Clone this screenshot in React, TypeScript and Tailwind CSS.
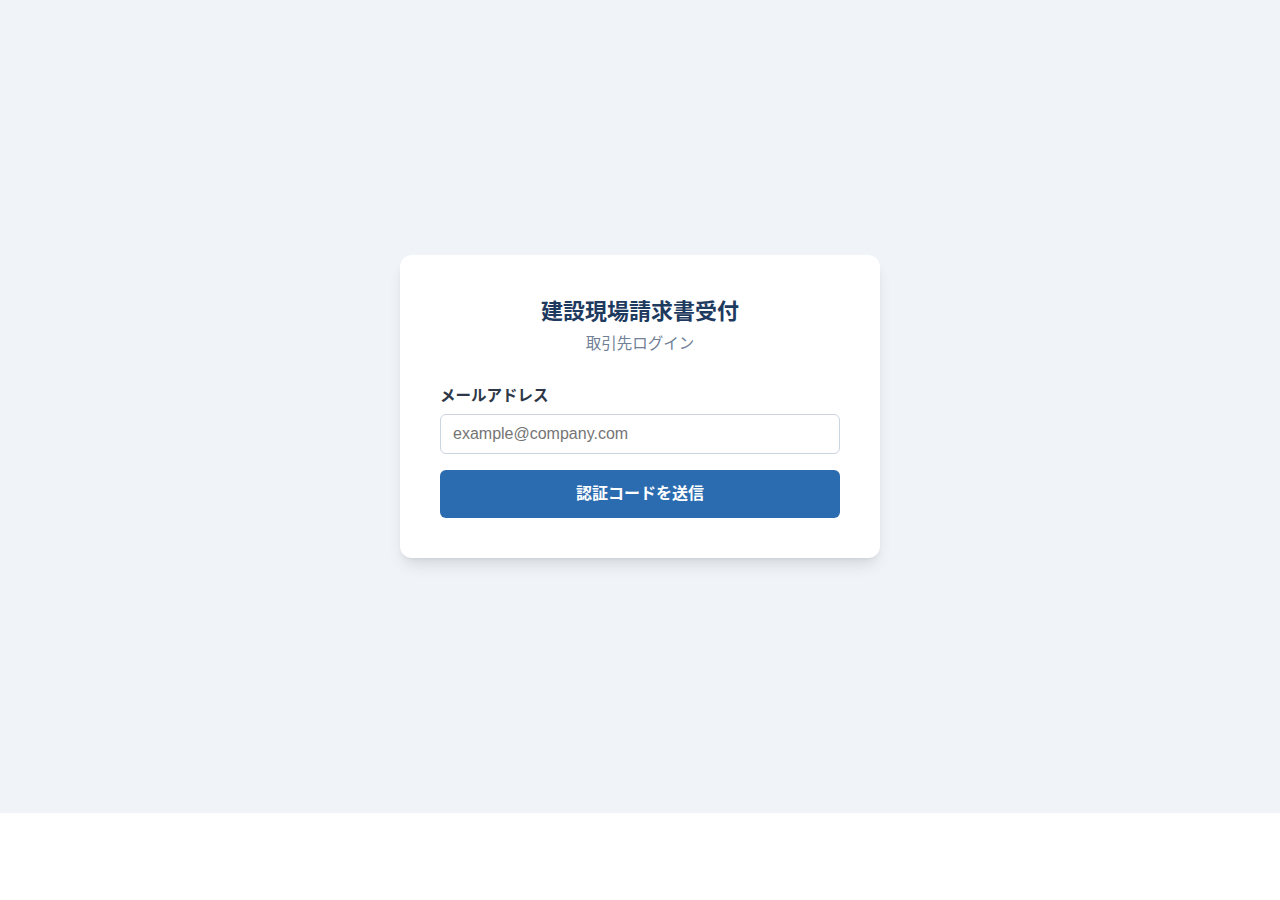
import React from 'react';

const App = () => {
  return (
    <div
      className="h-[813px] bg-[#f0f4f8] flex items-center justify-center"
      style={{ fontFamily: '"Liberation Sans", "Noto Sans CJK JP", sans-serif' }}
    >
      <div className="w-[480px] bg-white rounded-xl shadow-lg px-10 pt-10 pb-10">
        <h1 className="text-center text-[22px] leading-[33px] font-bold text-[#1e3a5f]">
          建設現場請求書受付
        </h1>
        <p className="mt-1 text-center text-[15.5px] leading-6 text-[#718096]">取引先ログイン</p>

        <form className="mt-7" onSubmit={(e) => e.preventDefault()}>
          <label className="block text-[15.5px] leading-6 font-bold text-[#2d3748] mb-1.5">
            メールアドレス
          </label>
          <input
            type="email"
            placeholder="example@company.com"
            className="block w-full h-10 px-3 border border-[#cbd5e0] rounded-md text-base text-[#2d3748] placeholder:text-[#757575] outline-none"
          />
          <button
            type="submit"
            className="mt-4 w-full h-12 rounded-md bg-[#2b6cb0] text-white text-base font-bold"
          >
            認証コードを送信
          </button>
        </form>
      </div>
    </div>
  );
};

export default App;
